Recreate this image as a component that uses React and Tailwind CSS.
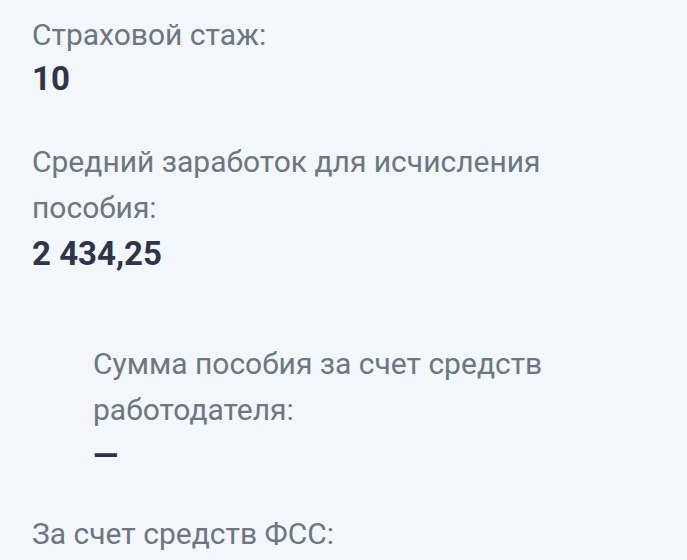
export default function App() {
  return (
    <div className="min-h-[560px] w-full bg-[#f3f6fa] pl-8 pt-[12px] font-['Roboto',sans-serif] text-[30px] leading-[46px]">
      <div>
        <div className="text-[#6c7780]">Страховой стаж:</div>
        <div className="text-[33px] leading-[42px] font-bold text-[#2e3548]">10</div>
      </div>
      <div className="mt-[39px]">
        <div className="w-[560px] text-[#6c7780]">Средний заработок для исчисления пособия:</div>
        <div className="text-[33px] font-bold text-[#2e3548]">2 434,25</div>
      </div>
      <div className="mt-[64px] pl-[61px]">
        <div className="w-[480px] text-[#6c7780]">Сумма пособия за счет средств работодателя:</div>
        <div className="text-[33px] font-bold text-[#2e3548]">—</div>
      </div>
      <div className="mt-[32px]">
        <div className="text-[#6c7780]">За счет средств ФСС:</div>
      </div>
    </div>
  )
}
